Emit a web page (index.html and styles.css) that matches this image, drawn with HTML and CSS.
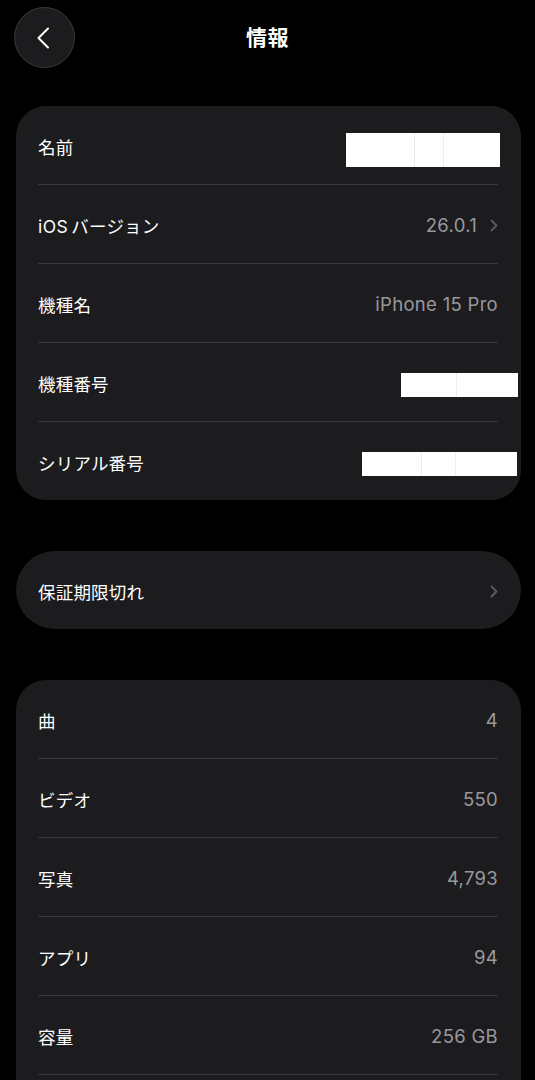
FILE: index.html
```html
<!DOCTYPE html>
<html lang="ja">

<head>
  <meta charset="UTF-8">
  <meta name="viewport" content="width=device-width, initial-scale=1.0">
  <title>情報</title>
  <link rel="stylesheet" href="styles.css">
</head>

<body>
  <header class="nav">
    <button type="button" class="nav__back" aria-label="戻る">
      <svg width="14" height="22" viewBox="0 0 14 22">
        <path d="M12 1.5 L2.5 11 L12 20.5" fill="none" stroke="#fff" stroke-width="2" stroke-linecap="round" stroke-linejoin="round" />
      </svg>
    </button>
    <h1 class="nav__title">情報</h1>
    <span class="nav__spacer"></span>
  </header>

  <section class="card">
    <div class="row">
      <span class="row__label">名前</span>
      <span class="redact redact--name"><i></i><i></i><i></i></span>
    </div>
    <div class="row">
      <span class="row__label"><span class="row__latin">iOS</span>バージョン</span>
      <span class="row__value">26.0.1
        <svg class="chevron" width="8" height="13" viewBox="0 0 8 13">
          <path d="M1.5 1.5 L6.5 6.5 L1.5 11.5" fill="none" stroke="currentColor" stroke-width="1.8" stroke-linecap="round" stroke-linejoin="round" />
        </svg>
      </span>
    </div>
    <div class="row">
      <span class="row__label">機種名</span>
      <span class="row__value">iPhone 15 Pro</span>
    </div>
    <div class="row">
      <span class="row__label">機種番号</span>
      <span class="redact redact--model"><i></i><i></i></span>
    </div>
    <div class="row">
      <span class="row__label">シリアル番号</span>
      <span class="redact redact--serial"><i></i><i></i><i></i></span>
    </div>
  </section>

  <section class="card card--pill">
    <div class="row">
      <span class="row__label">保証期限切れ</span>
      <span class="row__value">
        <svg class="chevron" width="8" height="13" viewBox="0 0 8 13">
          <path d="M1.5 1.5 L6.5 6.5 L1.5 11.5" fill="none" stroke="currentColor" stroke-width="1.8" stroke-linecap="round" stroke-linejoin="round" />
        </svg>
      </span>
    </div>
  </section>

  <section class="card card--open">
    <div class="row">
      <span class="row__label">曲</span>
      <span class="row__value">4</span>
    </div>
    <div class="row">
      <span class="row__label">ビデオ</span>
      <span class="row__value">550</span>
    </div>
    <div class="row">
      <span class="row__label">写真</span>
      <span class="row__value">4,793</span>
    </div>
    <div class="row">
      <span class="row__label">アプリ</span>
      <span class="row__value">94</span>
    </div>
    <div class="row">
      <span class="row__label">容量</span>
      <span class="row__value">256 GB</span>
    </div>
  </section>
</body>

</html>
```

FILE: styles.css
```css
* {
  box-sizing: border-box;
}
html,
body {
  background: #000;
}
body {
  margin: 0;
  padding: 0 14px 0 16px;
  color: #fff;
  font-family: Inter, "Noto Sans CJK JP", sans-serif;
  font-size: 17.5px;
  overflow: hidden;
}
.nav {
  display: flex;
  align-items: center;
  justify-content: space-between;
  height: 61px;
  margin: 7px 0 38px -2px;
}
.nav__back {
  display: flex;
  align-items: center;
  justify-content: center;
  width: 61px;
  height: 61px;
  padding: 0 3px 0 0;
  border: 1px solid #3a3a3c;
  border-radius: 50%;
  background: #1c1c1e;
}
.nav__title {
  margin: 0;
  padding-bottom: 4px;
  font-size: 21px;
  font-weight: 700;
  letter-spacing: 0.5px;
}
.nav__spacer {
  width: 61px;
}
.card {
  margin-bottom: 51px;
  padding: 0 23px 0 22px;
  border-radius: 30px;
  background: #1c1c1e;
}
.card--pill {
  border-radius: 39px;
}
.card--open {
  padding-bottom: 40px;
}
.row {
  display: flex;
  align-items: center;
  justify-content: space-between;
  height: 79px;
  padding-top: 2px;
  border-bottom: 1px solid #38383a;
}
.card .row:last-child {
  height: 78px;
  border-bottom: none;
}
.card--open .row:last-child {
  height: 79px;
  border-bottom: 1px solid #38383a;
}
.row__label {
  letter-spacing: 0.2px;
}
.row__latin {
  margin-right: 3px;
  letter-spacing: 0.5px;
}
.row__value {
  display: flex;
  align-items: center;
  gap: 13px;
  color: #98989d;
  font-size: 18.5px;
  letter-spacing: 0.3px;
}
.chevron {
  color: #5c5c60;
}
.redact {
  display: flex;
  background: #fff;
  margin-top: 4px;
}
.redact i {
  height: 100%;
  border-right: 1px solid #ececec;
}
.redact i:last-child {
  border-right: none;
}
.redact--name {
  width: 154px;
  height: 34px;
  margin-top: 8px;
  margin-right: -2px;
}
.redact--name i:nth-child(1) { width: 69px; }
.redact--name i:nth-child(2) { width: 29px; }
.redact--name i:nth-child(3) { flex: 1; }
.redact--model {
  width: 117px;
  height: 24px;
  margin-right: -20px;
}
.redact--model i:nth-child(1) { width: 56px; }
.redact--model i:nth-child(2) { flex: 1; }
.redact--serial {
  width: 155px;
  height: 24px;
  margin-right: -19px;
}
.redact--serial i:nth-child(1) { width: 60px; }
.redact--serial i:nth-child(2) { width: 34px; }
.redact--serial i:nth-child(3) { flex: 1; }
```
